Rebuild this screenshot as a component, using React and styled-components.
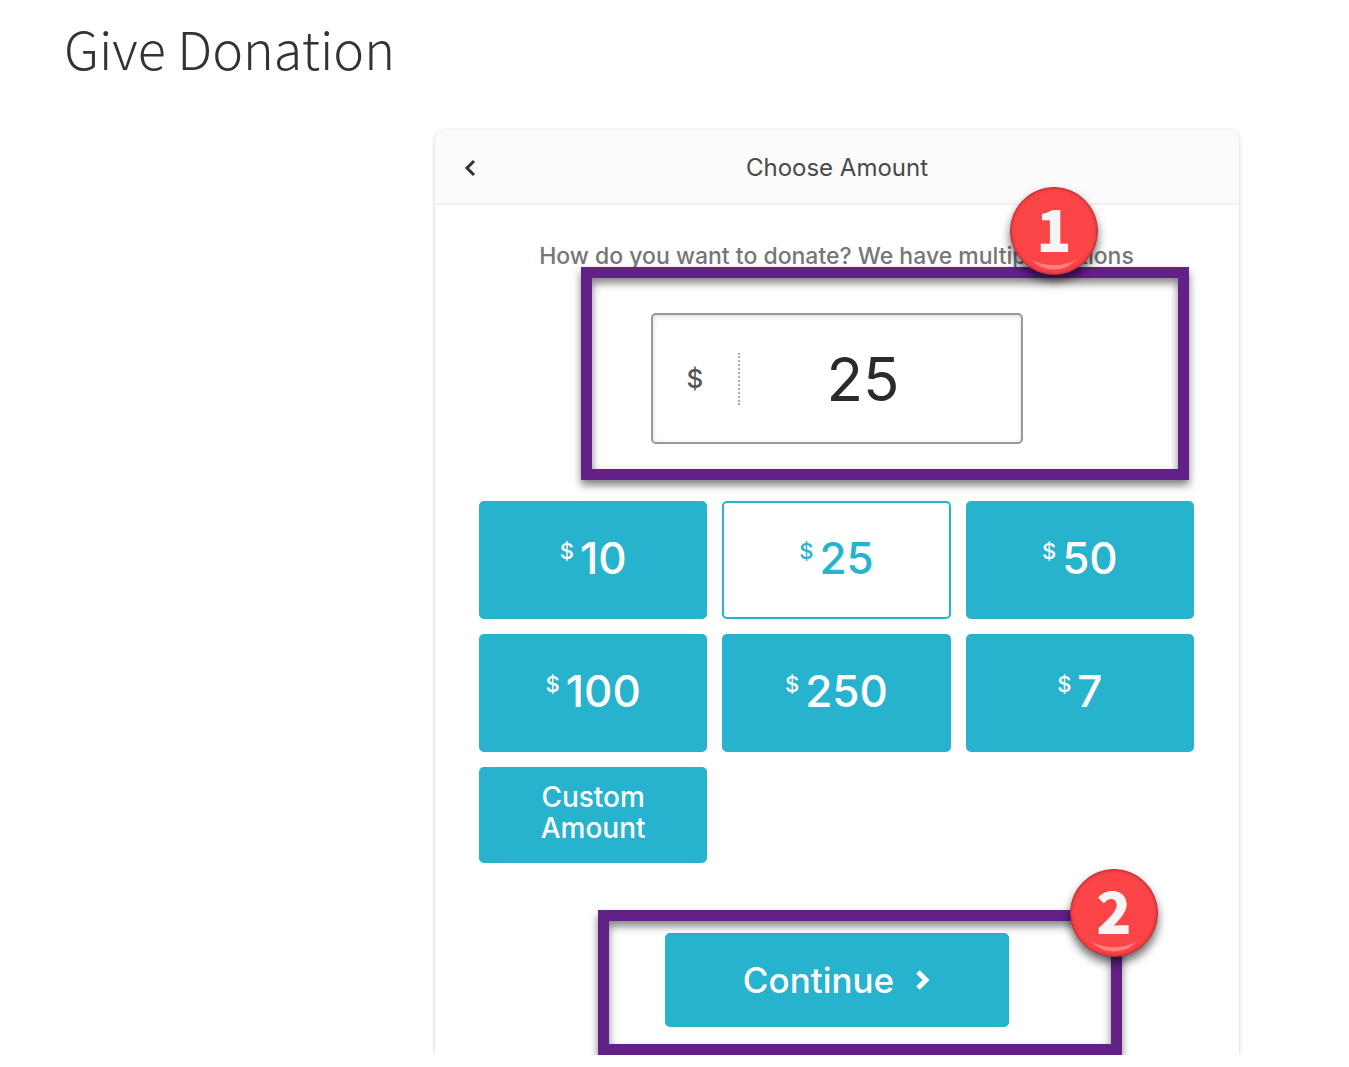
import React, { useState } from "react";
import styled, { createGlobalStyle, css } from "styled-components";

const TEAL = "#27b2cd";
const PURPLE = "#632087";

const GlobalStyle = createGlobalStyle`
  *, *::before, *::after { box-sizing: border-box; }
  body {
    margin: 0;
    background: #fff;
    font-family: Inter, "Liberation Sans", sans-serif;
  }
  button, input { font: inherit; margin: 0; }
`;

const Page = styled.main`
  padding: 16px 110px 0 64px;
  overflow: hidden;
`;

const Title = styled.h1`
  margin: 0 0 50px;
  font-family: "Noto Sans CJK SC", "Open Sans", sans-serif;
  font-size: 52px;
  line-height: 64px;
  font-weight: 200;
  color: #333;
`;

const Card = styled.form`
  width: 100%;
  max-width: 804px;
  margin-left: auto;
  border-radius: 10px 10px 0 0;
  background: #fff;
  box-shadow: 0 1px 4px rgba(0, 0, 0, 0.2);
`;

const CardHeader = styled.header`
  display: grid;
  grid-template-columns: 70px 1fr 70px;
  align-items: center;
  height: 75px;
  padding-top: 2px;
  border-bottom: 2px solid #f2f2f2;
  border-radius: 10px 10px 0 0;
  background: #fbfbfb;
`;

const BackButton = styled.button`
  display: grid;
  place-items: center;
  height: 44px;
  padding: 0;
  border: 0;
  background: none;
  color: #333;
  cursor: pointer;
`;

const CardTitle = styled.h2`
  margin: 0;
  text-align: center;
  font-size: 24px;
  line-height: 32px;
  font-weight: 400;
  color: #4a4a4a;
`;

const CardBody = styled.div`
  padding: 35px 45px 0 44px;
`;

const Prompt = styled.label`
  display: block;
  text-align: center;
  font-size: 23px;
  line-height: 32px;
  font-weight: 500;
  color: #767676;
`;

const Region = styled.div`
  position: relative;
  display: flex;
  justify-content: center;
  padding: ${(p) => p.$pad};
`;

const Highlight = styled.div`
  position: absolute;
  inset: ${(p) => p.$inset};
  border: 11px solid ${PURPLE};
  box-shadow: 0 5px 8px rgba(0, 0, 0, 0.5), inset 0 5px 8px rgba(0, 0, 0, 0.5);
  pointer-events: none;
`;

const Badge = styled.span`
  position: absolute;
  top: ${(p) => p.$top};
  right: ${(p) => p.$right};
  display: grid;
  place-items: center;
  width: 88px;
  height: 88px;
  border: 1px solid #b8323a;
  border-radius: 50%;
  background: #fa4446;
  box-shadow: 0 6px 10px rgba(0, 0, 0, 0.6), inset 0 0 3px rgba(140, 20, 30, 0.6);
  font-family: "Noto Sans CJK SC", "DejaVu Sans", sans-serif;
  font-size: 58px;
  line-height: 78px;
  padding-bottom: 8px;
  font-weight: 900;
  color: #f5f5f5;
`;

const Shine = styled.svg`
  position: absolute;
  left: 20px;
  bottom: 3px;
`;

const AmountField = styled.div`
  display: flex;
  align-items: center;
  width: 372px;
  height: 131px;
  padding: 0 34px 0 0;
  border: 2px solid #999;
  border-radius: 5px;
  background: #fff;
  box-shadow: inset 0 1px 5px rgba(0, 0, 0, 0.15);
`;

const FieldSymbol = styled.span`
  flex: 0 0 87px;
  border-right: 2px dotted #aaa;
  text-align: center;
  font-size: 26px;
  line-height: 52px;
  font-weight: 500;
  color: #555;
`;

const FieldInput = styled.input`
  flex: 1;
  min-width: 0;
  padding: 0;
  border: 0;
  outline: 0;
  background: none;
  text-align: center;
  font-size: 60px;
  line-height: 72px;
  font-weight: 400;
  color: #2b2b2b;
`;

const Levels = styled.div`
  display: grid;
  grid-template-columns: repeat(3, 1fr);
  gap: 15px;
`;

const solid = css`
  border: 2px solid ${TEAL};
  border-radius: 5px;
  background: ${(p) => (p.$selected ? "#fff" : TEAL)};
  color: ${(p) => (p.$selected ? TEAL : "#fff")};
  cursor: pointer;
`;

const LevelButton = styled.button`
  ${solid}
  display: flex;
  justify-content: center;
  align-items: center;
  gap: 6px;
  height: 118px;
  padding: 0 0 4px;
  font-size: 44px;
  line-height: 52px;
  font-weight: 500;
`;

const Currency = styled.span`
  align-self: flex-start;
  padding-top: 32px;
  font-size: 22px;
  line-height: 32px;
`;

const CustomButton = styled.button`
  ${solid}
  height: 96px;
  padding: 0 44px 4px;
  font-size: 28px;
  line-height: 31px;
  font-weight: 500;
`;

const ContinueButton = styled.button`
  ${solid}
  display: flex;
  justify-content: center;
  align-items: center;
  gap: 22px;
  width: 344px;
  height: 94px;
  padding: 0;
  font-size: 35px;
  line-height: 44px;
  font-weight: 500;
`;

const AMOUNTS = [10, 25, 50, 100, 250, 7];

function Step({ children, top, right }) {
  return (
    <Badge $top={top} $right={right}>
      {children}
      <Shine width="46" height="12" viewBox="0 0 46 12" fill="none" aria-hidden="true">
        <path d="M0 0C12 14 34 14 46 0C34 8 12 8 0 0Z" fill="#ff7f80" />
      </Shine>
    </Badge>
  );
}

export default function App() {
  const [amount, setAmount] = useState("25");
  return (
    <>
      <GlobalStyle />
      <Page>
        <Title>Give Donation</Title>
        <Card onSubmit={(e) => e.preventDefault()}>
          <CardHeader>
            <BackButton type="button" aria-label="Back">
              <svg width="12" height="18" viewBox="0 0 12 18" fill="none" stroke="currentColor" strokeWidth="3">
                <path d="M10 2L3 9L10 16" />
              </svg>
            </BackButton>
            <CardTitle>Choose Amount</CardTitle>
          </CardHeader>
          <CardBody>
            <Prompt htmlFor="amount">How do you want to donate? We have multiple options</Prompt>
            <Region $pad="41px 0 57px">
              <AmountField>
                <FieldSymbol>$</FieldSymbol>
                <FieldInput id="amount" value={amount} onChange={(e) => setAmount(e.target.value)} />
              </AmountField>
              <Highlight $inset="-5px 5px 21px 102px" />
              <Step top="-85px" right="96px">1</Step>
            </Region>
            <Levels>
              {AMOUNTS.map((n) => (
                <LevelButton
                  key={n}
                  type="button"
                  $selected={amount === String(n)}
                  onClick={() => setAmount(String(n))}
                >
                  <Currency>$</Currency>
                  {n}
                </LevelButton>
              ))}
              <CustomButton type="button" onClick={() => setAmount("")}>
                Custom Amount
              </CustomButton>
            </Levels>
            <Region $pad="70px 0 28px">
              <ContinueButton type="submit">
                Continue
                <svg width="14" height="22" viewBox="0 0 14 22" fill="none" stroke="currentColor" strokeWidth="5">
                  <path d="M2 3L10 11L2 19" />
                </svg>
              </ContinueButton>
              <Highlight $inset="47px 72px 0 119px" />
              <Step top="6px" right="36px">2</Step>
            </Region>
          </CardBody>
        </Card>
      </Page>
    </>
  );
}
